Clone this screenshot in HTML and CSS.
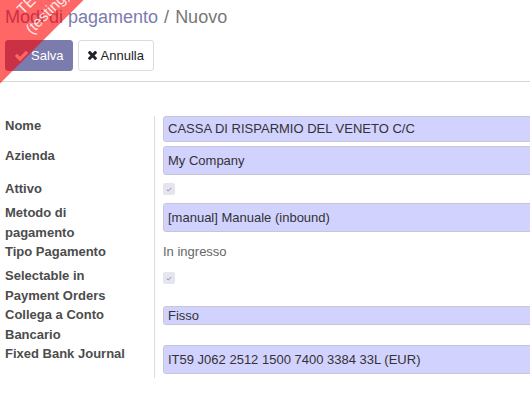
FILE: index.html
```html
<!DOCTYPE html>
<html lang="it">
<head>
<meta charset="utf-8">
<title>Modi di pagamento / Nuovo</title>
<link rel="stylesheet" href="styles.css">
</head>
<body>
<div class="ribbon">TEST<br>(testing)</div>
<header class="control-panel">
  <ol class="breadcrumb">
    <li class="crumb-link">Modi di pagamento</li>
    <li class="crumb-sep">/</li>
    <li class="crumb-active">Nuovo</li>
  </ol>
  <div class="buttons">
    <button class="btn btn-primary" type="button">
      <svg class="icon-check" viewBox="121 334 1550 1188" aria-hidden="true"><path fill="currentColor" d="M1671 566q0 40-28 68l-724 724-136 136q-28 28-68 28t-68-28l-136-136-362-362q-28-28-28-68t28-68l136-136q28-28 68-28t68 28l294 295 656-657q28-28 68-28t68 28l136 136q28 28 28 68z"/></svg>
      <span>Salva</span>
    </button>
    <button class="btn btn-secondary" type="button">
      <svg class="icon-times" viewBox="110 390 1188 1164" aria-hidden="true"><path fill="currentColor" d="M1298 1322q0 40-28 68l-136 136q-28 28-68 28t-68-28l-294-294-294 294q-28 28-68 28t-68-28l-136-136q-28-28-28-68t28-68l294-294-294-294q-28-28-28-68t28-68l136-136q28-28 68-28t68 28l294 294 294-294q28-28 68-28t68 28l136 136q28 28 28 68t-28 68l-294 294 294 294q28 28 28 68z"/></svg>
      <span>Annulla</span>
    </button>
  </div>
</header>
<main class="form">
  <div class="group">
    <div class="label">Nome</div>
    <div class="value"><div class="field field-char">CASSA DI RISPARMIO DEL VENETO C/C</div></div>

    <div class="label">Azienda</div>
    <div class="value"><div class="field field-m2o">My Company</div></div>

    <div class="label">Attivo</div>
    <div class="value"><span class="checkbox"><svg viewBox="0 0 8 6" aria-hidden="true"><path d="M1 3.2 L3 5 L7 1" fill="none" stroke="currentColor" stroke-width="1.3"/></svg></span></div>

    <div class="label">Metodo di pagamento</div>
    <div class="value"><div class="field field-m2o">[manual] Manuale (inbound)</div></div>

    <div class="label">Tipo Pagamento</div>
    <div class="value"><div class="readonly">In ingresso</div></div>

    <div class="label">Selectable in Payment Orders</div>
    <div class="value"><span class="checkbox checkbox-low"><svg viewBox="0 0 8 6" aria-hidden="true"><path d="M1 3.2 L3 5 L7 1" fill="none" stroke="currentColor" stroke-width="1.3"/></svg></span></div>

    <div class="label">Collega a Conto Bancario</div>
    <div class="value"><div class="field field-select">Fisso</div></div>

    <div class="label">Fixed Bank Journal</div>
    <div class="value"><div class="field field-m2o field-last">IT59 J062 2512 1500 7400 3384 33L (EUR)</div></div>
  </div>
</main>
</body>
</html>
```

FILE: styles.css
```css
* {
  box-sizing: border-box;
}

html,
body {
  margin: 0;
  padding: 0;
  overflow: hidden;
}

body {
  position: relative;
  width: 530px;
  height: 403px;
  background: #ffffff;
  font-family: "Liberation Sans", Arial, sans-serif;
  font-size: 13px;
  line-height: 1.5;
  color: #4c4c4c;
}

/* environment ribbon */
.ribbon {
  position: absolute;
  left: -69px;
  top: -44px;
  width: 200px;
  height: 80px;
  padding-top: 33px;
  line-height: 20px;
  font-size: 15px;
  text-align: center;
  color: rgba(255, 255, 255, 0.88);
  background: rgba(255, 0, 0, 0.6);
  transform: rotate(-45deg);
  z-index: 10;
  pointer-events: none;
}

/* control panel */
.control-panel {
  padding: 5px 0 10px 5px;
  border-bottom: 1px solid #d6d6d6;
}

.breadcrumb {
  display: flex;
  margin: 0;
  padding: 0;
  list-style: none;
  font-size: 18px;
  line-height: 25px;
}

.crumb-link {
  color: #7c7bad;
}

.crumb-sep {
  margin: 0 6px;
  color: #777777;
}

.crumb-active {
  color: #777777;
}

.buttons {
  display: flex;
  gap: 5px;
  margin-top: 10px;
}

.btn {
  display: inline-flex;
  align-items: center;
  height: 31px;
  margin: 0;
  border: 1px solid transparent;
  border-radius: 3px;
  font-family: inherit;
  font-size: 13px;
  line-height: 1.5;
  cursor: pointer;
}

.btn-primary {
  gap: 3px;
  padding: 0 8px 0 9px;
  color: #ffffff;
  background: #7c7bad;
  border-color: #7c7bad;
}

.btn-secondary {
  gap: 4px;
  padding: 0 9px 0 9px;
  color: #212529;
  background: #ffffff;
  border-color: #dcdcdc;
}

.icon-check {
  width: 13px;
  height: 10px;
}

.icon-times {
  width: 9px;
  height: 9px;
}

/* form */
.form {
  margin-top: 34px;
}

.group {
  display: grid;
  grid-template-columns: 149px 700px;
  padding-left: 5px;
}

.label {
  padding-right: 22px;
  font-weight: bold;
  color: #4c4c4c;
}

.value {
  padding-left: 8px;
  border-left: 1px solid #dddddd;
}

.field {
  display: flex;
  align-items: center;
  padding: 0 4px;
  color: #333333;
  background: #d2d2ff;
  border: 1px solid #c6c6d8;
  border-radius: 3px;
  white-space: nowrap;
}

.field-char {
  height: 26px;
  margin-bottom: 4px;
}

.field-m2o {
  height: 29px;
  margin-bottom: 4px;
}

.field-select {
  height: 19px;
  margin-top: 1px;
}

.field-last {
  margin-top: 1px;
}

.readonly {
  margin-bottom: 4.5px;
  color: #666666;
}

.checkbox {
  display: flex;
  align-items: center;
  justify-content: center;
  width: 12px;
  height: 12px;
  margin: 4px 0 8px;
  color: #8a89b8;
  background: #e4e5ee;
  border-radius: 2px;
}

.checkbox-low {
  margin-top: 6px;
}

.checkbox svg {
  width: 6px;
  height: 5px;
}
```
